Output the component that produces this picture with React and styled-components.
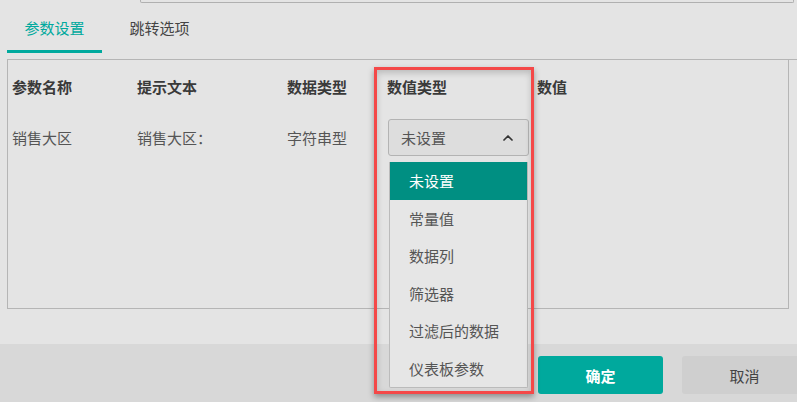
import React from "react";
import styled, { createGlobalStyle } from "styled-components";
import { ChevronUp } from "lucide-react";

const GlobalStyle = createGlobalStyle`
  html, body {
    margin: 0;
    padding: 0;
    background: #e4e4e4;
  }
  * {
    box-sizing: border-box;
  }
`;

const Page = styled.div`
  position: relative;
  width: 797px;
  height: 402px;
  overflow: hidden;
  display: flex;
  flex-direction: column;
  background: #e4e4e4;
  font-family: "Noto Sans CJK SC", "Noto Sans", sans-serif;
  font-size: 15px;
  color: #555;
`;

const TopField = styled.div`
  margin-left: 140px;
  width: 654px;
  height: 3px;
  border: 1px solid #b0b0b0;
  border-top: none;
  border-radius: 0 0 2px 2px;
`;

const TabBar = styled.div`
  display: flex;
  gap: 10px;
  margin-left: 7px;
  padding-bottom: 6px;
  border-bottom: 1px solid #b5b5b5;
`;

const Tab = styled.div`
  width: 95px;
  height: 50px;
  padding-top: 2px;
  display: flex;
  align-items: center;
  justify-content: center;
  color: ${(p) => (p.$active ? "#00a99d" : "#444")};
  border-bottom: 3px solid ${(p) => (p.$active ? "#00a99d" : "transparent")};
`;

const Panel = styled.div`
  margin: 0 8px 0 7px;
  height: 249px;
  border: 1px solid #b5b5b5;
  border-top: none;
  padding-left: 4px;
`;

const Row = styled.div`
  display: grid;
  grid-template-columns: 125px 150px 100px 150px 1fr;
  align-items: center;
  height: ${(p) => p.$h}px;
  padding-top: ${(p) => p.$pt || 0}px;
`;

const HeadCell = styled.div`
  font-weight: 700;
  color: #3a3a3a;
`;

const Cell = styled.div`
  position: relative;
  color: #555;
`;

const Select = styled.div`
  width: 141px;
  height: 37px;
  margin-left: 1px;
  display: flex;
  align-items: center;
  justify-content: space-between;
  padding: 0 12px 0 12px;
  border: 1px solid #b3b3b3;
  border-radius: 3px;
  background: #dddddd;
  color: #555;
`;

const Menu = styled.div`
  position: absolute;
  top: 43px;
  left: 2px;
  width: 139px;
  background: #e6e6e6;
  border: 1px solid #bbbbbb;
  border-top: none;
  border-radius: 0 0 2px 2px;
`;

const MenuItem = styled.div`
  height: 37.5px;
  display: flex;
  align-items: center;
  padding-left: 19px;
  background: ${(p) => (p.$selected ? "#008f82" : "transparent")};
  color: ${(p) => (p.$selected ? "#fff" : "#555")};
`;

const Footer = styled.div`
  margin-top: 35px;
  flex: 1;
  background: #d8d8d8;
  display: flex;
  justify-content: flex-end;
  gap: 19px;
  padding-top: 12px;
  margin-right: -10px;
`;

const Button = styled.div`
  width: 125px;
  height: 38px;
  border-radius: 3px;
  display: flex;
  align-items: center;
  justify-content: center;
  background: ${(p) => (p.$primary ? "#00a99d" : "#cfcfcf")};
  color: ${(p) => (p.$primary ? "#fff" : "#444")};
  font-weight: ${(p) => (p.$primary ? 700 : 400)};
`;

const Highlight = styled.div`
  position: absolute;
  left: 374px;
  top: 67px;
  width: 160px;
  height: 327px;
  border: 3px solid #f44848;
  pointer-events: none;
  box-shadow: 0 3px 6px rgba(0, 0, 0, 0.35), inset 0 3px 6px rgba(0, 0, 0, 0.18);
`;

const options = ["未设置", "常量值", "数据列", "筛选器", "过滤后的数据", "仪表板参数"];

export default function App() {
  return (
    <Page>
      <GlobalStyle />
      <TopField />
      <TabBar>
        <Tab $active>参数设置</Tab>
        <Tab>跳转选项</Tab>
      </TabBar>
      <Panel>
        <Row $h={52}>
          <HeadCell>参数名称</HeadCell>
          <HeadCell>提示文本</HeadCell>
          <HeadCell>数据类型</HeadCell>
          <HeadCell>数值类型</HeadCell>
          <HeadCell>数值</HeadCell>
        </Row>
        <Row $h={44} $pt={7}>
          <Cell>销售大区</Cell>
          <Cell>销售大区：</Cell>
          <Cell>字符串型</Cell>
          <Cell>
            <Select>
              未设置
              <ChevronUp size={16} strokeWidth={2.6} color="#333" />
            </Select>
            <Menu>
              {options.map((o, i) => (
                <MenuItem key={o} $selected={i === 0}>
                  {o}
                </MenuItem>
              ))}
            </Menu>
          </Cell>
          <Cell />
        </Row>
      </Panel>
      <Footer>
        <Button $primary>确定</Button>
        <Button>取消</Button>
      </Footer>
      <Highlight />
    </Page>
  );
}
